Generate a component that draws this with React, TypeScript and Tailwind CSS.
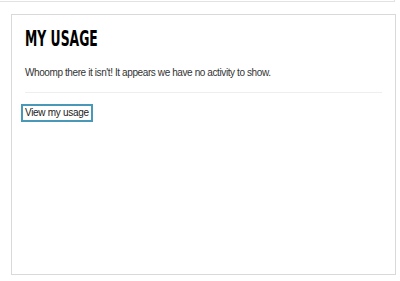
export default function App() {
  return (
    <div className="relative h-[281px] w-[400px] overflow-hidden bg-white font-['Liberation_Sans',Arial,sans-serif]">
      <div className="h-[2px] w-[395px] border-b border-r border-[#e2e2e2]" />
      <div className="mt-[12px] ml-[11px] flex h-[261px] w-[385px] flex-col border border-[#d9d9d9] px-[13px] pt-[12px]">
        <h2 className="origin-left scale-x-[0.59] font-['DejaVu_Sans',sans-serif] text-[21px] font-bold leading-[24px] text-black">
          MY USAGE
        </h2>
        <p className="mt-[15px] text-[10px] leading-[14px] tracking-[-0.4px] text-[#333]">
          Whoomp there it isn&apos;t! It appears we have no activity to show.
        </p>
        <div className="mt-[12px] h-px w-[357px] bg-[#eeeeee]" />
        <div className="mt-[11px] flex">
          <button
            type="button"
            className="-ml-[4px] border-2 border-[#4a98b8] px-[2px] py-0 text-[10px] leading-[14px] tracking-[-0.3px] text-[#222]"
          >
            View my usage
          </button>
        </div>
      </div>
    </div>
  );
}
